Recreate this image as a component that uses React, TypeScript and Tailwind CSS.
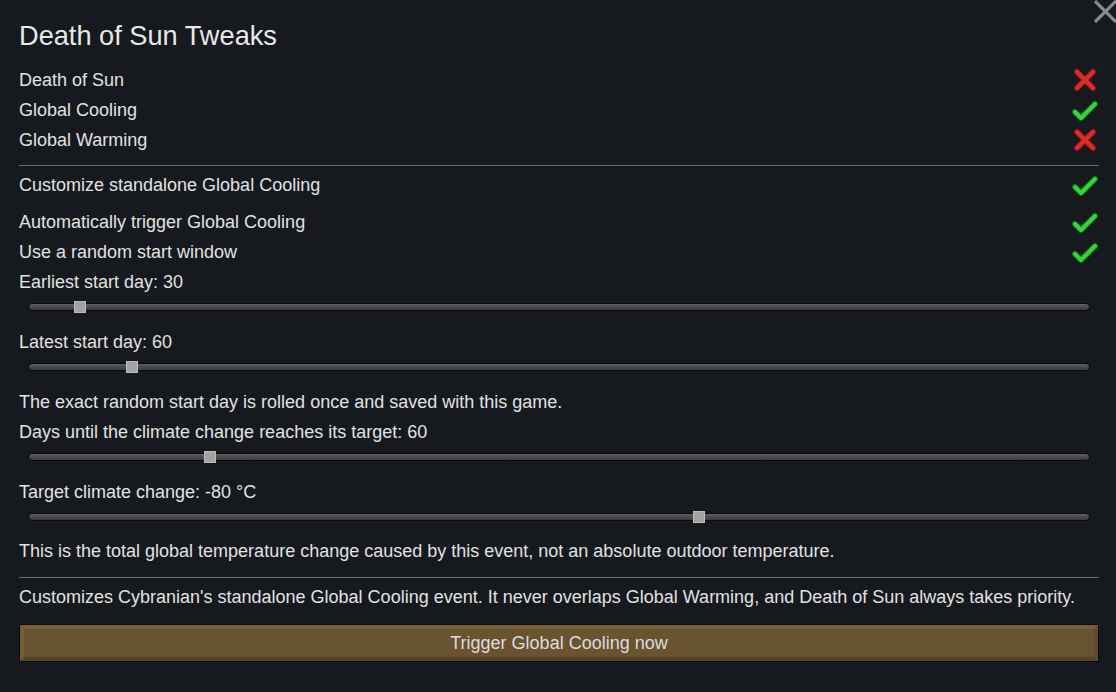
import React from "react";

function CrossIcon() {
  return (
    <svg width="26" height="26" viewBox="0 0 26 26">
      <g strokeLinecap="round">
        <path d="M5 5 L21 21 M21 5 L5 21" stroke="#7a1414" strokeWidth="6.5" />
        <path d="M5 5 L21 21 M21 5 L5 21" stroke="#dc2d2d" strokeWidth="4.2" />
      </g>
    </svg>
  );
}

function CheckIcon() {
  return (
    <svg width="28" height="26" viewBox="0 0 28 26">
      <g strokeLinecap="round" strokeLinejoin="round" fill="none">
        <path d="M4 15 L10 21 L24 7" stroke="#0f5a12" strokeWidth="6.5" />
        <path d="M4 15 L10 21 L24 7" stroke="#36d43a" strokeWidth="4.2" />
      </g>
    </svg>
  );
}

function Toggle({ label, on }: { label: string; on: boolean }) {
  return (
    <div className="flex h-[30px] items-center justify-between">
      <span>{label}</span>
      <span className="flex w-[28px] items-center justify-center">
        {on ? <CheckIcon /> : <CrossIcon />}
      </span>
    </div>
  );
}

function Label({ children }: { children: React.ReactNode }) {
  return <div className="flex h-[30px] items-center whitespace-nowrap">{children}</div>;
}

// Horizontal slider; pos is the thumb position as a fraction of the track.
function Slider({ pos }: { pos: number }) {
  return (
    <div className="h-[30px] pl-[9px] pr-[9px]">
      <div className="relative flex h-[20px] items-center">
        <div className="h-[8px] w-full rounded-full border border-[#090a0c] bg-gradient-to-b from-[#606060] via-[#4a4a4a] to-[#3a3a3a]" />
        <div
          className="absolute top-[4px] h-[12px] w-[12px] border border-[#bdbdbd] bg-[#a3a3a3]"
          style={{ left: `calc(${pos * 100}% - 6px)` }}
        />
      </div>
    </div>
  );
}

function Separator() {
  return <div className="h-px w-full bg-[#6c6d6f]" />;
}

export default function App() {
  return (
    <div className="relative h-[692px] w-[1116px] overflow-hidden bg-[#16191d] pl-[19px] pr-[17px] font-['Liberation_Sans',Arial,sans-serif] text-[18px] text-[#e2e2e2]">
      <svg
        className="absolute left-[1093px] top-[-1px]"
        width="24"
        height="24"
        viewBox="0 0 24 24"
      >
        <path d="M2 2 L23 23 M23 2 L2 23" stroke="#8a8a8a" strokeWidth="3.2" />
      </svg>

      <div className="pt-[21px]">
        <h1 className="h-[30px] text-[27.2px] leading-[30px] text-[#e8e8e8]">Death of Sun Tweaks</h1>
      </div>

      <div className="mt-[14px]">
        <Toggle label="Death of Sun" on={false} />
        <Toggle label="Global Cooling" on={true} />
        <Toggle label="Global Warming" on={false} />
      </div>

      <div className="mt-[10px]">
        <Separator />
      </div>

      <div className="mt-[4px]">
        <Toggle label="Customize standalone Global Cooling" on={true} />
      </div>
      <div className="mt-[7px]">
        <Toggle label="Automatically trigger Global Cooling" on={true} />
        <Toggle label="Use a random start window" on={true} />
        <Label>Earliest start day: 30</Label>
        <Slider pos={52 / 1062} />
        <Label>Latest start day: 60</Label>
        <Slider pos={104 / 1062} />
        <Label>The exact random start day is rolled once and saved with this game.</Label>
        <Label>Days until the climate change reaches its target: 60</Label>
        <Slider pos={182 / 1062} />
        <Label>Target climate change: -80 °C</Label>
        <Slider pos={671 / 1062} />
        <div className="-mt-[1px]">
          <Label>
            This is the total global temperature change caused by this event, not an absolute outdoor temperature.
          </Label>
        </div>
      </div>

      <div className="mt-[11px]">
        <Separator />
      </div>

      <div className="mt-[4px]">
        <Label>
          Customizes Cybranian's standalone Global Cooling event. It never overlaps Global Warming, and Death of Sun always takes priority.
        </Label>
      </div>

      <button className="mt-[12px] block h-[38px] w-full border border-[#0a0a0a] p-0">
        <span className="flex h-full w-full items-center justify-center border-b-[4px] border-l-[4px] border-r-[4px] border-t-[4px] border-b-[#57452a] border-l-[#785d35] border-r-[#5f4b2d] border-t-[#7b6036] bg-[#6a5331] text-[#dcdcdc]">
          Trigger Global Cooling now
        </span>
      </button>
    </div>
  );
}
